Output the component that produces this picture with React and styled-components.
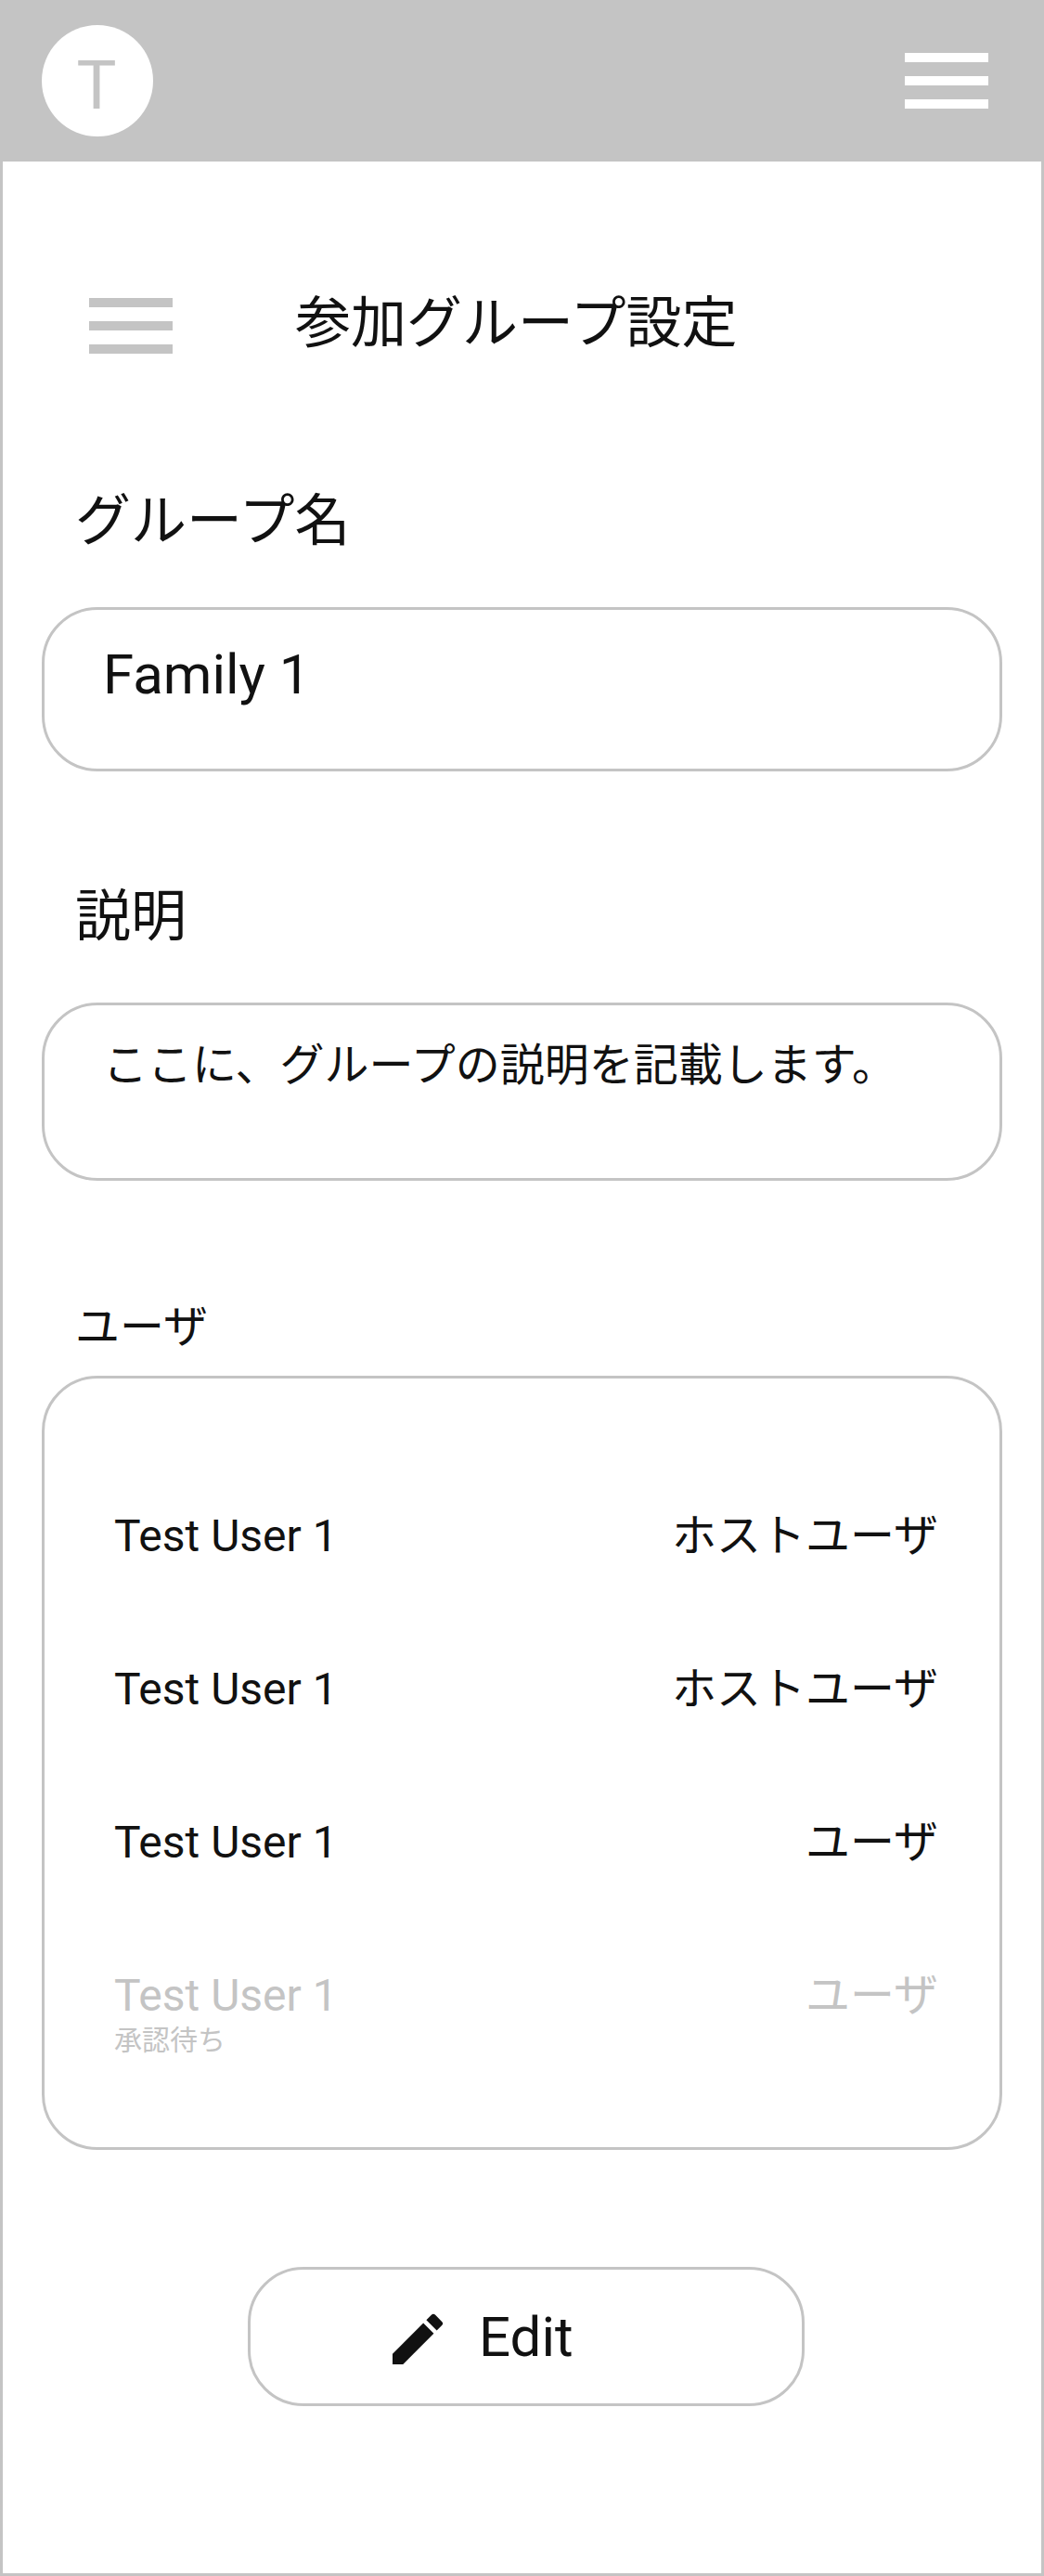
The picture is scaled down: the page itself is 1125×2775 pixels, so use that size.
import React from "react";
import styled, { createGlobalStyle } from "styled-components";

const GRAY = "#c4c4c4";
const INK = "#111111";

const GlobalStyle = createGlobalStyle`
  *, *::before, *::after { box-sizing: border-box; }
  body {
    margin: 0;
    background: #ffffff;
    color: ${INK};
    font-family: Roboto, "Noto Sans CJK JP", sans-serif;
  }
`;

const Screen = styled.div`
  display: flex;
  flex-direction: column;
  width: 1125px;
  height: 2775px;
  background: #ffffff;
`;

const Header = styled.header`
  display: flex;
  flex: none;
  align-items: center;
  justify-content: space-between;
  height: 174px;
  padding: 0 60px 0 45px;
  background: ${GRAY};
`;

const Avatar = styled.div`
  display: flex;
  justify-content: center;
  width: 120px;
  height: 120px;
  padding-top: 24px;
  padding-right: 2px;
  border-radius: 50%;
  background: #ffffff;
  color: ${GRAY};
  font-size: 72px;
  line-height: 84px;
`;

const MenuButton = styled.button`
  display: flex;
  flex: none;
  flex-direction: column;
  justify-content: space-between;
  width: 90px;
  height: 60px;
  padding: 0;
  border: 0;
  background: none;
`;

const Bar = styled.span`
  height: 10px;
  background: ${(p) => p.$color};
`;

const Main = styled.main`
  display: flex;
  flex: 1;
  flex-direction: column;
  padding: 139px 42px 0;
  border: solid ${GRAY};
  border-width: 0 3px 3px;
`;

const TitleRow = styled.div`
  display: flex;
  align-items: center;
  gap: 132px;
  height: 76px;
  padding-left: 51px;
`;

const Title = styled.h1`
  margin: 0;
  padding-bottom: 4px;
  font-size: 60px;
  font-weight: 400;
  line-height: 72px;
`;

const Section = styled.section`
  display: flex;
  flex-direction: column;
  gap: ${(p) => p.$gap}px;
  margin-top: ${(p) => p.$top}px;
`;

const Label = styled.h2`
  margin: 0;
  padding-left: 36px;
  font-size: ${(p) => (p.$small ? 48 : 60)}px;
  font-weight: 400;
  line-height: ${(p) => (p.$small ? 60 : 72)}px;
`;

const Field = styled.div`
  height: ${(p) => p.$height}px;
  padding: ${(p) => p.$padTop}px 63px 0;
  border: 3px solid ${GRAY};
  border-radius: 60px;
  font-size: ${(p) => p.$size}px;
  line-height: ${(p) => p.$size + 12}px;
  white-space: nowrap;
`;

const UserList = styled.ul`
  display: flex;
  flex-direction: column;
  gap: 105px;
  height: 834px;
  margin: 0;
  padding: 140px 66px 0 75px;
  border: 3px solid ${GRAY};
  border-radius: 60px;
  list-style: none;
`;

const UserRow = styled.li`
  display: flex;
  justify-content: space-between;
  color: ${(p) => (p.$pending ? GRAY : INK)};
  font-size: 48px;
  line-height: 60px;
`;

const UserInfo = styled.div`
  display: flex;
  flex-direction: column;
`;

const PendingNote = styled.span`
  font-size: 30px;
  line-height: 36px;
`;

const EditButton = styled.button`
  display: flex;
  align-items: flex-start;
  gap: 30px;
  width: 600px;
  height: 150px;
  margin: 126px 0 0 222px;
  padding: 37px 0 0 144px;
  border: 3px solid ${GRAY};
  border-radius: 60px;
  background: #ffffff;
  color: ${INK};
  font-family: inherit;
  font-size: 60px;
  line-height: 72px;
`;

const PencilIcon = styled.svg`
  flex: none;
  width: 72px;
  height: 72px;
  margin-top: 2px;
  fill: currentColor;
`;

const users = [
  { name: "Test User 1", role: "ホストユーザ" },
  { name: "Test User 1", role: "ホストユーザ" },
  { name: "Test User 1", role: "ユーザ" },
  { name: "Test User 1", role: "ユーザ", note: "承認待ち" },
];

function Menu({ color }) {
  return (
    <MenuButton aria-label="menu">
      <Bar $color={color} />
      <Bar $color={color} />
      <Bar $color={color} />
    </MenuButton>
  );
}

export default function App() {
  return (
    <>
      <GlobalStyle />
      <Screen>
        <Header>
          <Avatar>T</Avatar>
          <Menu color="#ffffff" />
        </Header>
        <Main>
          <TitleRow>
            <Menu color={GRAY} />
            <Title>参加グループ設定</Title>
          </TitleRow>
          <Section $top={137} $gap={56}>
            <Label>グループ名</Label>
            <Field $height={177} $padTop={34} $size={60}>Family 1</Field>
          </Section>
          <Section $top={121} $gap={56}>
            <Label>説明</Label>
            <Field $height={192} $padTop={35} $size={48}>ここに、グループの説明を記載します。</Field>
          </Section>
          <Section $top={128} $gap={22}>
            <Label $small>ユーザ</Label>
            <UserList>
              {users.map((user, i) => (
                <UserRow key={i} $pending={Boolean(user.note)}>
                  <UserInfo>
                    <span>{user.name}</span>
                    {user.note && <PendingNote>{user.note}</PendingNote>}
                  </UserInfo>
                  <span>{user.role}</span>
                </UserRow>
              ))}
            </UserList>
          </Section>
          <EditButton>
            <PencilIcon viewBox="0 0 24 24" aria-hidden="true">
              <path d="M3 17.25V21h3.75L17.81 9.94l-3.75-3.75L3 17.25zM20.71 7.04a.996.996 0 0 0 0-1.41l-2.34-2.34a.996.996 0 0 0-1.41 0l-1.83 1.83 3.75 3.75 1.83-1.83z" />
            </PencilIcon>
            Edit
          </EditButton>
        </Main>
      </Screen>
    </>
  );
}
